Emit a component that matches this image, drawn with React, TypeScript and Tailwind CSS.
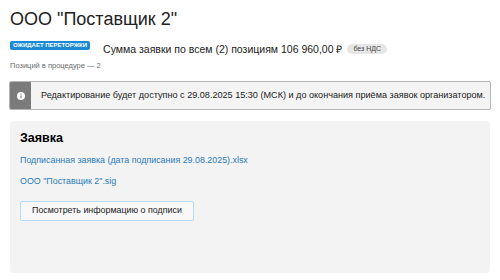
export default function App() {
  return (
    <div className="w-[500px] h-[280px] bg-white overflow-hidden font-['Liberation_Sans',Arial,sans-serif] text-[#222]">
      <div className="px-[10px] pt-[8px]">
        <h1 className="text-[18px] leading-[22px]">ООО "Поставщик 2"</h1>

        <div className="mt-[5px] flex items-center">
          <span className="bg-[#1a8ad4] text-white text-[6px] font-bold uppercase rounded-[2px] px-[3px] h-[9px] leading-[9px]">
            Ожидает переторжки
          </span>
          <span className="ml-[13px] text-[10.5px] leading-[14px] mt-[7px]">
            Сумма заявки по всем (2) позициям 106 960,00 ₽
          </span>
          <span className="ml-[5px] mt-[7px] bg-[#e6e6e6] text-[#444] text-[7px] rounded-full px-[6px] h-[10px] leading-[10px]">
            без НДС
          </span>
        </div>

        <div className="mt-[4px] text-[7.5px] text-[#6b6b6b]">Позиций в процедуре — 2</div>
      </div>

      <div className="mx-[9px] mt-[10px] flex h-[29px] border border-[#b5b5b5] rounded-[2px] bg-[#f4f4f4] overflow-hidden">
        <div className="w-[21px] bg-[#7b7b7b] flex items-center justify-center">
          <svg width="8" height="8" viewBox="0 0 16 16">
            <circle cx="8" cy="8" r="8" fill="#fff" />
            <rect x="7" y="6.5" width="2" height="6" fill="#7b7b7b" />
            <circle cx="8" cy="4.2" r="1.2" fill="#7b7b7b" />
          </svg>
        </div>
        <div className="flex items-center pl-[10px] text-[9.1px] whitespace-nowrap">
          Редактирование будет доступно с 29.08.2025 15:30 (МСК) и до окончания приёма заявок организатором.
        </div>
      </div>

      <div className="mx-[10px] mt-[11px] h-[152px] bg-[#f3f3f3] rounded-[4px] px-[10px] pt-[8px]">
        <div className="text-[12.5px] font-bold text-black">Заявка</div>
        <div className="mt-[6px] text-[8.9px] text-[#2b7bba]">Подписанная заявка (дата подписания 29.08.2025).xlsx</div>
        <div className="mt-[8px] text-[8.9px] text-[#2b7bba]">ООО "Поставщик 2".sig</div>
        <button className="mt-[12px] h-[20px] px-[11px] text-[8.9px] bg-[#f8f8f8] border border-[#b4dcf7] rounded-[2px] text-[#222]">
          Посмотреть информацию о подписи
        </button>
      </div>
    </div>
  );
}
